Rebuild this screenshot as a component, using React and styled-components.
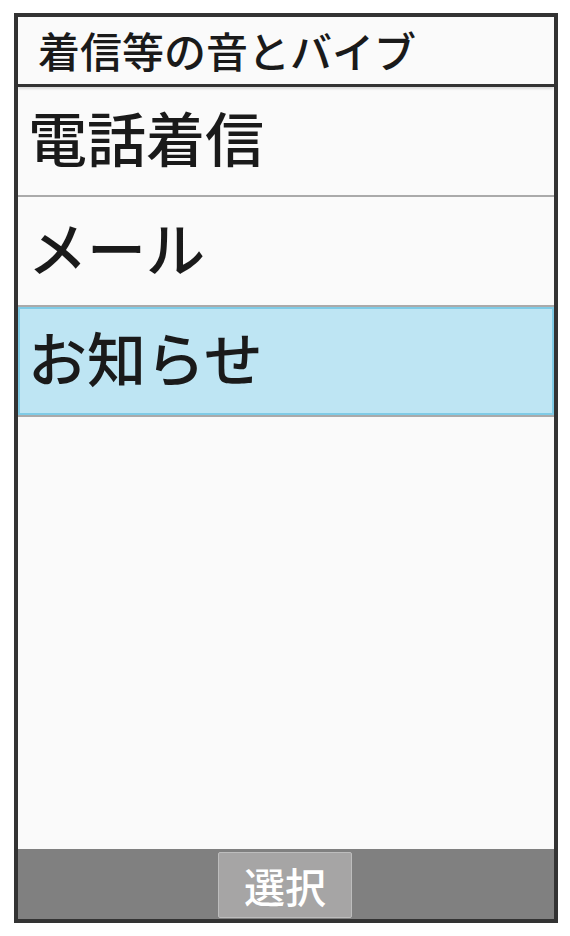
import React from 'react';
import styled, { createGlobalStyle } from 'styled-components';

const GlobalStyle = createGlobalStyle`
    html, body {
        margin: 0;
        padding: 0;
        background: #ffffff;
    }
    body {
        font-family: 'Noto Sans CJK JP', 'Noto Sans', sans-serif;
    }
`;

const Page = styled.div`
    padding: 13px 12px 0 14px;
`;

const Frame = styled.div`
    width: 536px;
    height: 902px;
    border: 4px solid #333333;
    background: #fafafa;
    display: flex;
    flex-direction: column;
`;

const Header = styled.div`
    height: 70px;
    flex-shrink: 0;
    border-bottom: 3px solid #333333;
    box-shadow: 0 2px 2px rgba(0, 0, 0, 0.12);
    display: flex;
    align-items: center;
    padding-left: 20px;
    padding-bottom: 2px;
    box-sizing: border-box;
    font-size: 42px;
    font-weight: 500;
    color: #1a1a1a;
    line-height: 1;
    position: relative;
    z-index: 1;
`;

const List = styled.div`
    flex: 1;
    display: flex;
    flex-direction: column;
`;

const Row = styled.div`
    height: 110px;
    box-sizing: border-box;
    border-bottom: 2px solid #aaaaaa;
    display: flex;
    flex-direction: column;
`;

const RowInner = styled.div`
    flex: 1;
    display: flex;
    align-items: center;
    padding-left: ${p => (p.selected ? 8 : 10)}px;
    padding-bottom: 10px;
    font-size: 59px;
    font-weight: 500;
    line-height: 1;
    color: #1a1a1a;
    background: ${p => (p.selected ? '#bee5f3' : 'transparent')};
    border: ${p => (p.selected ? '2px solid #7fcbe6' : 'none')};
`;

const Footer = styled.div`
    height: 70px;
    flex-shrink: 0;
    background: #808080;
    display: flex;
    justify-content: center;
    align-items: flex-start;
    padding-top: 3px;
    box-sizing: border-box;
`;

const SoftKey = styled.div`
    width: 134px;
    height: 66px;
    box-sizing: border-box;
    background: #a6a5a5;
    border: 1px solid #bdbdbd;
    border-radius: 2px;
    color: #ffffff;
    font-size: 41px;
    font-weight: 500;
    line-height: 1;
    display: flex;
    align-items: center;
    justify-content: center;
    margin-right: 2px;
`;

const items = [
    { id: 'call', label: '電話着信' },
    { id: 'mail', label: 'メール' },
    { id: 'info', label: 'お知らせ', selected: true },
];

export default function App() {
    return (
        <>
            <GlobalStyle />
            <Page>
                <Frame>
                    <Header>着信等の音とバイブ</Header>
                    <List>
                        {items.map(item => (
                            <Row key={item.id}>
                                <RowInner selected={item.selected}>{item.label}</RowInner>
                            </Row>
                        ))}
                    </List>
                    <Footer>
                        <SoftKey>選択</SoftKey>
                    </Footer>
                </Frame>
            </Page>
        </>
    );
}
